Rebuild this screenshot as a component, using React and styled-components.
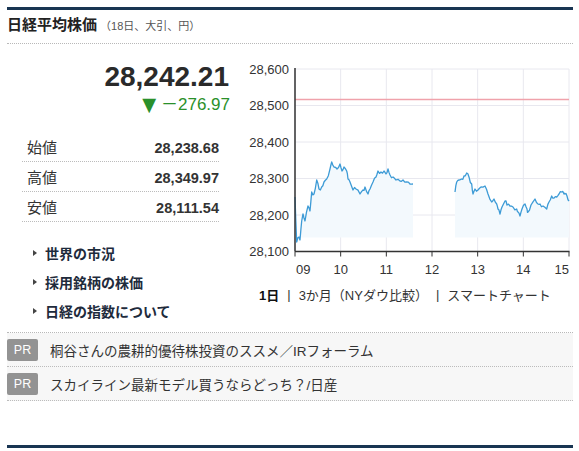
import React from "react";
import styled, { createGlobalStyle } from "styled-components";

const Global = createGlobalStyle`
  html, body { margin: 0; padding: 0; background: #fff; }
  body { font-family: "Liberation Sans", "Noto Sans CJK JP", sans-serif; color: #333; }
`;

const Wrap = styled.div`
  width: 566px;
  margin: 7px 0 0 7px;
  border-top: 3px solid #183552;
`;

const Header = styled.div`
  height: 34px;
  box-sizing: border-box;
  padding-top: 5px;
  display: flex;
  align-items: baseline;
  border-bottom: 1px dotted #b8b8b8;
`;

const Title = styled.h2`
  margin: 0;
  font-size: 15px;
  line-height: 20px;
  font-weight: bold;
  color: #222;
`;

const Sub = styled.span`
  font-size: 11px;
  color: #555;
  margin-left: 3px;
`;

const Main = styled.div`
  display: flex;
  height: 288px;
  border-bottom: 1px dotted #b8b8b8;
`;

const Left = styled.div`
  width: 233px;
  display: flex;
  flex-direction: column;
`;

const Price = styled.div`
  margin-top: 19px;
  padding-right: 11px;
  text-align: right;
  font-size: 28px;
  line-height: 28px;
  font-weight: bold;
  color: #2a2a2a;
`;

const Change = styled.div`
  margin-top: 5px;
  padding-right: 10px;
  height: 17px;
  text-align: right;
  font-size: 17px;
  line-height: 17px;
  color: #2a902a;
  display: flex;
  align-items: center;
  justify-content: flex-end;
  gap: 4px;
`;

const Arrow = styled.span`
  font-size: 19px;
  line-height: 17px;
  font-family: "DejaVu Sans", sans-serif;
  transform: scaleX(0.95);
`;

const Table = styled.div`
  margin: 19px 0 0 15px;
  width: 197px;
`;

const Row = styled.div`
  height: 29px;
  display: flex;
  align-items: center;
  justify-content: space-between;
  border-bottom: 1px dotted #bcbcbc;
`;

const Label = styled.span`
  padding-left: 5px;
  font-size: 15px;
  color: #333;
`;

const Value = styled.span`
  padding-top: 3px;
  font-size: 14.5px;
  font-weight: bold;
  color: #333;
`;

const Links = styled.div`
  padding: 16px 0 0 26px;
`;

const LinkItem = styled.div`
  height: 29px;
  display: flex;
  align-items: center;
  font-size: 14px;
  font-weight: bold;
  color: #1e2b3c;
`;

const Tri = styled.span`
  width: 0;
  height: 0;
  border-left: 4px solid #444;
  border-top: 3.5px solid transparent;
  border-bottom: 3.5px solid transparent;
  margin-right: 8px;
`;

const Right = styled.div`
  width: 333px;
  display: flex;
  flex-direction: column;
`;

const ChartSvg = styled.svg`
  display: block;
  margin-top: 10px;
`;

const ChartLinks = styled.div`
  height: 21px;
  display: flex;
  align-items: center;
  padding-left: 19px;
  font-size: 13px;
  color: #333;
`;

const Tab = styled.span`
  font-weight: ${(p) => (p.$active ? "bold" : "normal")};
  color: ${(p) => (p.$active ? "#111" : "#333")};
`;

const Sep = styled.span`
  margin: 0 8px;
  color: #333;
`;

const PRList = styled.div``;

const PRRow = styled.div`
  height: 33px;
  display: flex;
  align-items: center;
  background: #f7f7f7;
  border-bottom: 1px dotted #bcbcbc;
`;

const Badge = styled.span`
  width: 31px;
  height: 22px;
  border-radius: 2px;
  background: #939393;
  color: #fff;
  font-size: 12.5px;
  display: flex;
  align-items: center;
  justify-content: center;
  margin-right: 12px;
`;

const PRText = styled.span`
  font-size: 13.5px;
  color: #333;
`;

const Bottom = styled.div`
  margin-top: 44px;
  border-top: 3px solid #183552;
`;

const morning = [[295,198],[296.7,243],[299,238],[300,241],[301.7,222],[303,215],[305,222],[308,207],[310,212],[311.7,193],[314,195],[316.7,181],[319,190],[321.7,188],[324,183],[326.7,180],[330,170],[331.7,163],[334,168],[337,170],[340,165],[342,172],[344,168],[346.7,172],[348,180],[350,183],[353,191],[356,190],[360,195],[363,191],[365,188],[368,195],[370,190],[373,183],[376,178],[378,172],[381,173],[384,172],[386,175],[388,170],[390,176],[393,178],[396,181],[400,182],[403,181],[406.7,183],[410,185],[413,185]];
const afternoon = [[455,193],[456.7,183],[459,181],[461.7,180],[464,177],[466.7,174],[469,178],[471.7,185],[473,195],[475,190],[478,191],[481,188],[485,187],[488,195],[491.7,203],[494,200],[496.7,205],[498,210],[500,215],[502,208],[505,202],[507,206],[510,207],[513,208],[516.7,210],[518,213],[520,217],[522,210],[525,205],[527,210],[528,213],[531,206],[535,200],[538,205],[540,205],[543,207],[546.7,210],[549,203],[551.7,197],[554,199],[556.7,198],[559,195],[561.7,193],[564,195],[565,195],[567,197],[569,202]];

function jag(pts, seed) {
  const out = [];
  for (let i = 0; i < pts.length; i++) {
    out.push(pts[i]);
    if (i < pts.length - 1) {
      const [x1, y1] = pts[i];
      const [x2, y2] = pts[i + 1];
      const j = Math.sin((i + seed) * 12.9898) * 43758.5453;
      const r = (j - Math.floor(j) - 0.5) * 4;
      out.push([(x1 + x2) / 2, (y1 + y2) / 2 + r]);
    }
  }
  return out;
}

const BASE = 252.5;
const yTicks = ["28,600", "28,500", "28,400", "28,300", "28,200", "28,100"];
const hours = ["09", "10", "11", "12", "13", "14", "15"];
const X0 = 295;
const XW = (569 - 295) / 6;

function Series({ pts }) {
  const p = pts.map(([x, y]) => `${x},${y}`).join(" ");
  const fill = `${p} ${pts[pts.length - 1][0]},${BASE - 14} ${pts[0][0]},${BASE - 14}`;
  return (
    <>
      <polygon points={fill} fill="#f3f9fd" />
      <polyline points={p} fill="none" stroke="#3d9bd6" strokeWidth="1.3" strokeLinejoin="round" />
    </>
  );
}

function Chart() {
  const m = jag(morning, 1);
  const a = jag(afternoon, 7);
  return (
    <ChartSvg width="333" height="230" viewBox="0 0 333 230">
      <g transform="translate(-240,-55)" fontFamily="'Liberation Sans', sans-serif" fontSize="13" fill="#333">
        {yTicks.map((t, i) => {
          const y = 70 + i * 36.5;
          return (
            <g key={t}>
              <line x1={X0} x2={569} y1={y} y2={y} stroke="#e8e8ef" strokeWidth="1" />
              <text x="289" y={y + 4.5} textAnchor="end">{t}</text>
            </g>
          );
        })}
        {hours.map((h, i) => {
          const x = X0 + i * XW;
          const anchor = i === 0 ? "start" : i === hours.length - 1 ? "end" : "middle";
          const tx = i === 0 ? x + 1 : x;
          return (
            <g key={h}>
              <line x1={x} x2={x} y1={70} y2={BASE} stroke="#e8e8ef" strokeWidth="1" />
              <line x1={x} x2={x} y1={BASE} y2={BASE + 5} stroke="#333" strokeWidth="1" />
              <text x={tx} y={275} textAnchor={anchor}>{h}</text>
            </g>
          );
        })}
        <Series pts={m} />
        <Series pts={a} />
        <line x1={X0} x2={569} y1={100.5} y2={100.5} stroke="#f0a2ab" strokeWidth="1.5" />
        <line x1={X0} x2={X0} y1={69} y2={BASE} stroke="#333" strokeWidth="1.5" />
        <line x1={X0} x2={569.5} y1={BASE} y2={BASE} stroke="#333" strokeWidth="1.5" />
      </g>
    </ChartSvg>
  );
}

const stats = [
  ["始値", "28,238.68"],
  ["高値", "28,349.97"],
  ["安値", "28,111.54"],
];

const links = ["世界の市況", "採用銘柄の株価", "日経の指数について"];

const prs = [
  "桐谷さんの農耕的優待株投資のススメ／IRフォーラム",
  "スカイライン最新モデル買うならどっち？/日産",
];

export default function App() {
  return (
    <>
      <Global />
      <Wrap>
        <Header>
          <Title>日経平均株価</Title>
          <Sub>（18日、大引、円）</Sub>
        </Header>
        <Main>
          <Left>
            <Price>28,242.21</Price>
            <Change>
              <Arrow>▼</Arrow>
              <span>－276.97</span>
            </Change>
            <Table>
              {stats.map(([l, v]) => (
                <Row key={l}>
                  <Label>{l}</Label>
                  <Value>{v}</Value>
                </Row>
              ))}
            </Table>
            <Links>
              {links.map((l) => (
                <LinkItem key={l}>
                  <Tri />
                  {l}
                </LinkItem>
              ))}
            </Links>
          </Left>
          <Right>
            <Chart />
            <ChartLinks>
              <Tab $active>1日</Tab>
              <Sep>|</Sep>
              <Tab>3か月（NYダウ比較）</Tab>
              <Sep>|</Sep>
              <Tab>スマートチャート</Tab>
            </ChartLinks>
          </Right>
        </Main>
        <PRList>
          {prs.map((p) => (
            <PRRow key={p}>
              <Badge>PR</Badge>
              <PRText>{p}</PRText>
            </PRRow>
          ))}
        </PRList>
        <Bottom />
      </Wrap>
    </>
  );
}
